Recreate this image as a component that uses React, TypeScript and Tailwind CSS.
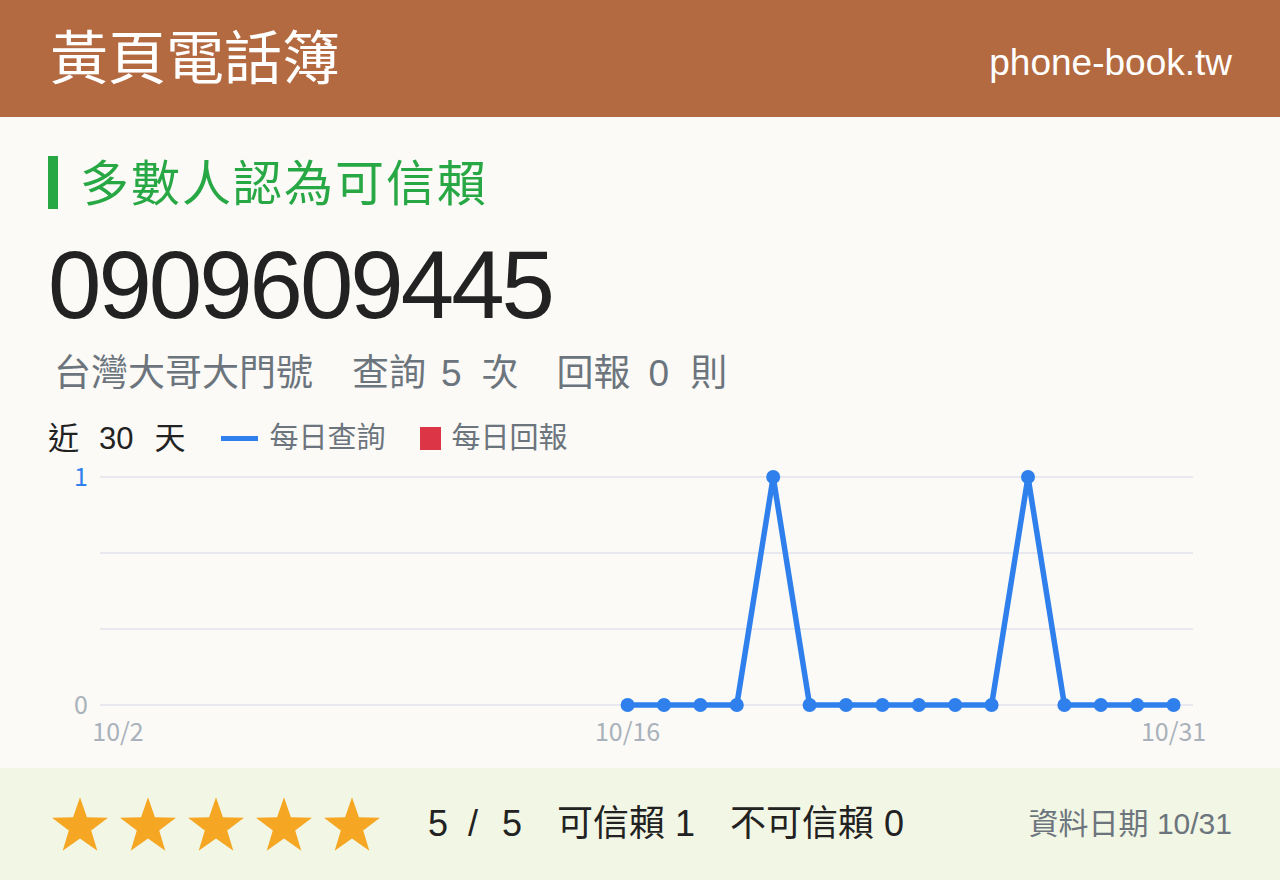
import React from 'react';

const queries: { day: number; value: number }[] = [
  16, 17, 18, 19, 20, 21, 22, 23, 24, 25, 26, 27, 28, 29, 30, 31,
].map((day) => ({ day, value: day === 20 || day === 27 ? 1 : 0 }));

// chart geometry (svg units = px)
const X0 = 70;
const STEP = 36.4;
const Y_TOP = 21;
const Y_BOTTOM = 249;
const xOf = (day: number) => X0 + (day - 2) * STEP;
const yOf = (v: number) => Y_BOTTOM - v * (Y_BOTTOM - Y_TOP);

function starPoints() {
  const pts: string[] = [];
  for (let i = 0; i < 10; i++) {
    const r = i % 2 === 0 ? 1 : 0.4;
    const a = (Math.PI / 5) * i - Math.PI / 2;
    pts.push(`${(Math.cos(a) * r).toFixed(3)},${(Math.sin(a) * r).toFixed(3)}`);
  }
  return pts.join(' ');
}

function Star() {
  return (
    <svg width="56" height="54" viewBox="-0.951 -1 1.902 1.809">
      <polygon points={starPoints()} fill="#f5a623" />
    </svg>
  );
}

function QueryChart() {
  const line = queries.map((p) => `${xOf(p.day).toFixed(1)},${yOf(p.value)}`).join(' ');
  return (
    <svg width="1184" height="300" viewBox="0 0 1184 300" className="block">
      {[Y_TOP, 97, 173, Y_BOTTOM].map((y) => (
        <line key={y} x1="52" x2="1145" y1={y} y2={y} stroke="#e8e9ee" strokeWidth="2" />
      ))}
      <g fontFamily="'Noto Sans CJK TC', sans-serif" fontSize="25">
        <text x="40" y={Y_TOP + 9} textAnchor="end" fill="#2f80ed">1</text>
        <text x="40" y={Y_BOTTOM + 9} textAnchor="end" fill="#a9b1bb">0</text>
        <text x={xOf(2)} y="285" textAnchor="middle" fill="#a9b1bb">10/2</text>
        <text x={xOf(16)} y="285" textAnchor="middle" fill="#a9b1bb">10/16</text>
        <text x={xOf(31)} y="285" textAnchor="middle" fill="#a9b1bb">10/31</text>
      </g>
      <polyline points={line} fill="none" stroke="#2f80ed" strokeWidth="5.5" strokeLinejoin="round" />
      {queries.map((p) => (
        <circle key={p.day} cx={xOf(p.day)} cy={yOf(p.value)} r="7" fill="#2f80ed" />
      ))}
    </svg>
  );
}

export default function App() {
  return (
    <div className="flex h-[880px] w-[1280px] flex-col bg-[#fbfaf6] font-['Liberation_Sans','Noto_Sans_CJK_TC',sans-serif]">
      {/* Header */}
      <header className="flex h-[117px] items-center justify-between bg-[#b46a40] px-[48px] text-white">
        <h1 className="pl-[2px] text-[58px] leading-none font-normal">黃頁電話簿</h1>
        <span className="pt-[7px] text-[37px] leading-none">phone-book.tw</span>
      </header>

      <main className="flex flex-1 flex-col px-[48px]">
        <div className="mt-[39px] flex h-[53px] items-center gap-[22px]">
          <div className="h-[53px] w-[10px] bg-[#28a745]" />
          <h2 className="pt-[3px] text-[49px] leading-none tracking-[2px] text-[#28a745]">多數人認為可信賴</h2>
        </div>

        <div className="mt-[28px] h-[96px] text-[96px] leading-[96px] tracking-[-3px] text-[#222]">0909609445</div>

        <div className="mt-[20px] flex h-[40px] items-center pl-[6px] text-[37px] leading-none text-[#6c757d]">
          <span>台灣大哥大門號</span>
          <span className="ml-[39px]">查詢</span>
          <span className="ml-[15px] mr-[20px]">5</span>
          <span>次</span>
          <span className="ml-[38px]">回報</span>
          <span className="ml-[18px] mr-[21px]">0</span>
          <span>則</span>
        </div>

        <div className="mt-[28px] flex h-[34px] items-center text-[31px] leading-none">
          <span className="text-[#222]">近</span>
          <span className="ml-[20px] mr-[21px] text-[#222]">30</span>
          <span className="text-[#222]">天</span>
          <span className="ml-[36px] h-[5px] w-[37px] bg-[#2f80ed]" />
          <span className="ml-[11px] text-[29px] text-[#6c757d]">每日查詢</span>
          <span className="ml-[34px] h-[23px] w-[21px] bg-[#dc3545]" />
          <span className="ml-[11px] text-[29px] text-[#6c757d]">每日回報</span>
        </div>

        <div className="mt-[1px]">
          <QueryChart />
        </div>
      </main>

      {/* Rating footer */}
      <footer className="flex h-[112px] items-center bg-[#f2f6e4] px-[48px]">
        <div className="flex gap-[12px] pl-[4px]">
          {[0, 1, 2, 3, 4].map((i) => (
            <Star key={i} />
          ))}
        </div>
        <div className="ml-[48px] flex items-center gap-[35px] text-[36px] leading-none text-[#222]">
          <span className="flex">
            <span>5</span>
            <span className="ml-[20px] mr-[24px]">/</span>
            <span>5</span>
          </span>
          <span>可信賴 1</span>
          <span>不可信賴 0</span>
        </div>
        <span className="ml-auto text-[30px] leading-none text-[#6c757d]">資料日期 10/31</span>
      </footer>
    </div>
  );
}
